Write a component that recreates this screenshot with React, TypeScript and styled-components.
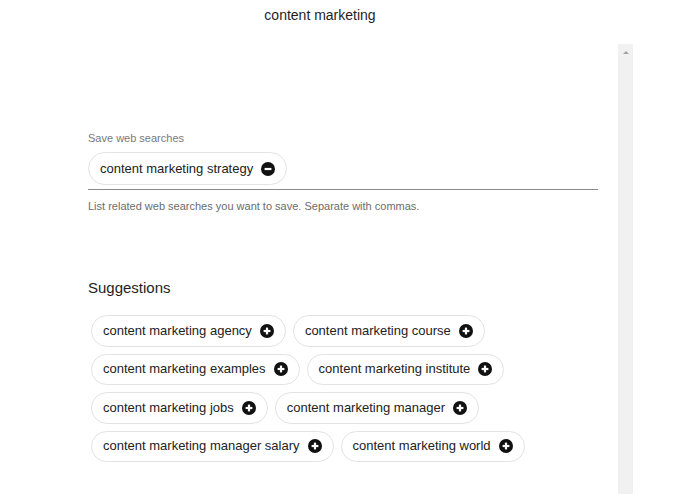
import { createGlobalStyle, styled } from "styled-components";

const GlobalStyle = createGlobalStyle`
  html, body {
    margin: 0;
    padding: 0;
    background: #ffffff;
    font-family: "Liberation Sans", Arial, sans-serif;
  }
`;

const savedSearches = ["content marketing strategy"];

const suggestions = [
  "content marketing agency",
  "content marketing course",
  "content marketing examples",
  "content marketing institute",
  "content marketing jobs",
  "content marketing manager",
  "content marketing manager salary",
  "content marketing world",
];

const ChipIcon = ({ kind }: { kind: "add" | "remove" }) => (
  <IconSvg viewBox="0 0 14 14" width={14} height={14}>
    <circle cx="7" cy="7" r="7" fill="#111" />
    <line x1="3.6" y1="7" x2="10.4" y2="7" stroke="#fff" strokeWidth="2.2" />
    {kind === "add" && (
      <line x1="7" y1="3.6" x2="7" y2="10.4" stroke="#fff" strokeWidth="2.2" />
    )}
  </IconSvg>
);

const App = () => {
  return (
    <>
      <GlobalStyle />
      <Page>
        <Header>
          <Title>content marketing</Title>
        </Header>
        <Body>
          <Content>
            <FieldLabel>Save web searches</FieldLabel>
            <Field>
              {savedSearches.map((s) => (
                <Chip key={s} $size="lg">
                  <ChipText>{s}</ChipText>
                  <ChipIcon kind="remove" />
                </Chip>
              ))}
            </Field>
            <HelpText>
              List related web searches you want to save. Separate with commas.
            </HelpText>
            <SectionTitle>Suggestions</SectionTitle>
            <ChipList>
              {suggestions.map((s) => (
                <Chip key={s} $size="md">
                  <ChipText>{s}</ChipText>
                  <ChipIcon kind="add" />
                </Chip>
              ))}
            </ChipList>
          </Content>
          <Scrollbar>
            <ScrollArrow />
          </Scrollbar>
        </Body>
      </Page>
    </>
  );
};

export default App;

const Page = styled.div`
  display: flex;
  flex-direction: column;
  width: 700px;
  height: 494px;
  overflow: hidden;
`;

const Header = styled.div`
  display: flex;
  justify-content: center;
  width: 640px;
  height: 30px;
`;

const Title = styled.h1`
  margin: 0;
  font-size: 14px;
  font-weight: 400;
  line-height: 30px;
  color: #1e1e1e;
`;

const Body = styled.div`
  display: flex;
  flex: 1;
  margin-top: 14px;
  min-height: 0;
`;

const Content = styled.div`
  display: flex;
  flex-direction: column;
  width: 510px;
  margin-left: 88px;
  padding-top: 87px;
`;

const FieldLabel = styled.div`
  font-size: 11px;
  line-height: 14px;
  color: #7a7a7a;
`;

const Field = styled.div`
  display: flex;
  margin-top: 7px;
  padding-bottom: 4px;
  border-bottom: 1px solid #8a8a8a;
`;

const HelpText = styled.div`
  margin-top: 9px;
  font-size: 11px;
  line-height: 14px;
  color: #6c6c6c;
`;

const SectionTitle = styled.h2`
  margin: 65px 0 0;
  font-size: 15px;
  font-weight: 400;
  line-height: 20px;
  color: #1e1e1e;
`;

const ChipList = styled.div`
  display: flex;
  flex-wrap: wrap;
  gap: 7px 7px;
  margin-top: 17px;
  padding-left: 3px;
`;

const Chip = styled.div<{ $size: "md" | "lg" }>`
  display: flex;
  align-items: center;
  gap: 8px;
  box-sizing: border-box;
  height: ${(p) => (p.$size === "lg" ? "33px" : "31.5px")};
  padding: 0 11px 0 11px;
  border: 1px solid #e3e3e3;
  border-radius: 17px;
  background: #fff;
`;

const ChipText = styled.span`
  font-size: 13px;
  line-height: 16px;
  color: #222;
  white-space: nowrap;
`;

const IconSvg = styled.svg`
  display: block;
  flex: none;
`;

const Scrollbar = styled.div`
  display: flex;
  justify-content: center;
  width: 15px;
  margin-left: 20px;
  background: #f1f1f1;
`;

const ScrollArrow = styled.div`
  width: 0;
  height: 0;
  margin-top: 7px;
  border-left: 3px solid transparent;
  border-right: 3px solid transparent;
  border-bottom: 3px solid #a3a3a3;
`;
